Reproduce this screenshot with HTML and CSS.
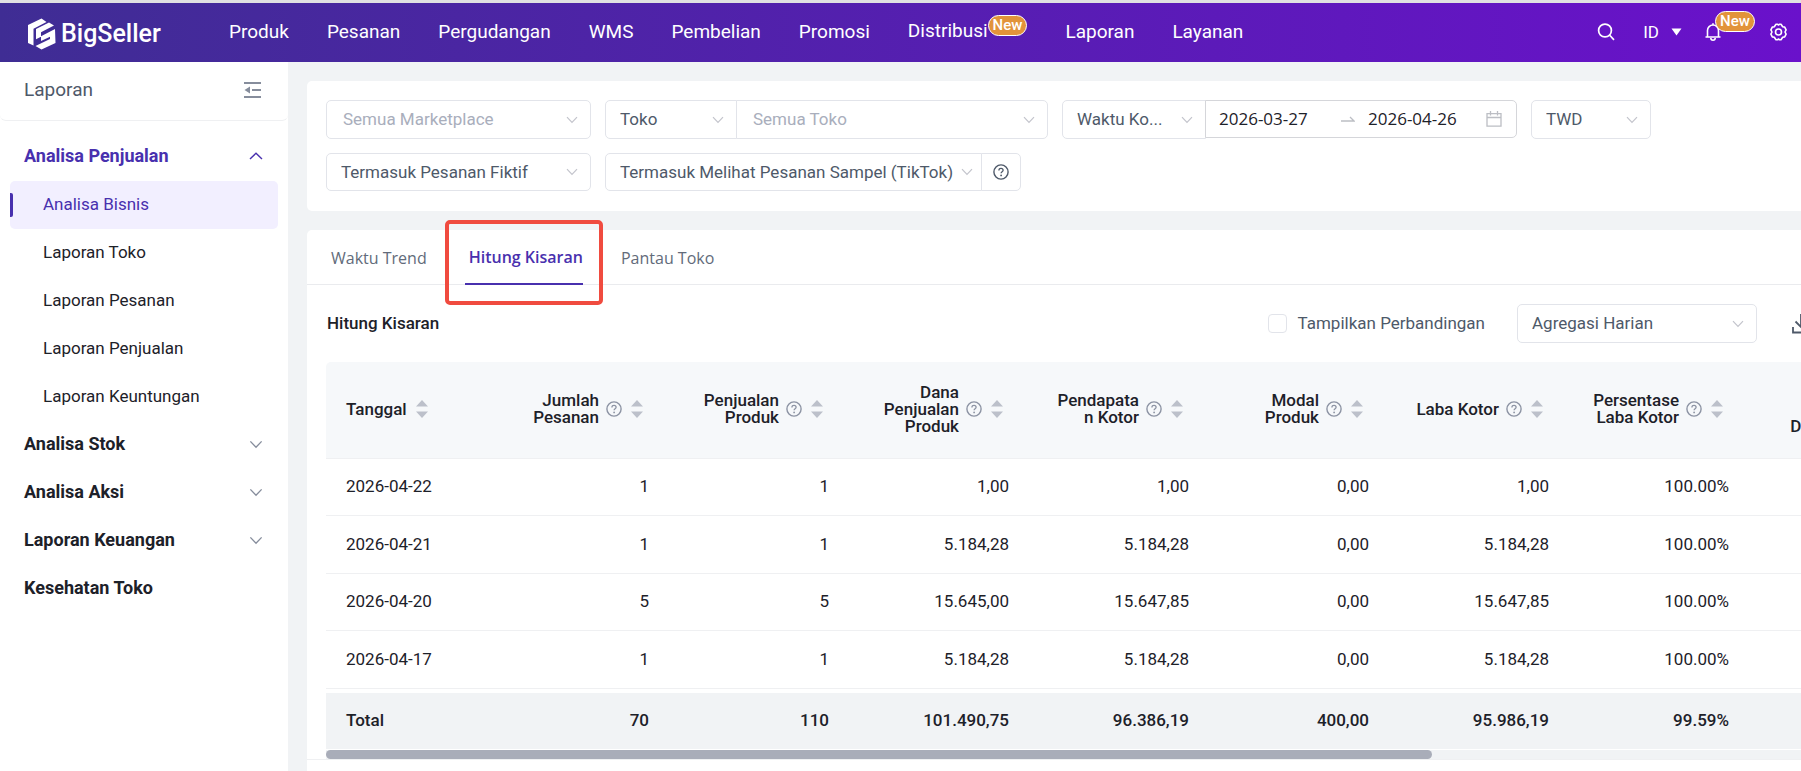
FILE: index.html
```html
<!DOCTYPE html>
<html lang="id">
<head>
<meta charset="utf-8">
<title>BigSeller - Analisa Bisnis</title>
<link rel="stylesheet" href="styles.css">
</head>
<body>
<svg class="defs" aria-hidden="true">
  <symbol id="down" viewBox="0 0 12 8"><path d="M1 1.2 6 6.4 11 1.2" fill="none" stroke="currentColor" stroke-width="1.2"/></symbol>
  <symbol id="up" viewBox="0 0 14 8"><path d="M1 7 7 1.2 13 7" fill="none" stroke="currentColor" stroke-width="1.4"/></symbol>
  <symbol id="help" viewBox="0 0 16 16"><circle cx="8" cy="8" r="7.1" fill="none" stroke="currentColor" stroke-width="1.4"/><path d="M5.9 6.4C5.9 5 6.8 4.3 8 4.3s2.1.8 2.1 1.9c0 1.5-2 1.5-2 3.1" fill="none" stroke="currentColor" stroke-width="1.3"/><circle cx="8.1" cy="11.4" r=".9" fill="currentColor"/></symbol>
  <symbol id="sort" viewBox="0 0 12 20"><path d="M6 1 12 7.500H0zM6 19 0 12.500H12z" fill="currentColor"/></symbol>
</svg>
<header class="topbar">
  <a class="logo" href="#">
    <svg width="30" height="32" viewBox="0 0 30 36" preserveAspectRatio="none"><path d="M14.500.5 1 8v20l5.500 3V12L19.500 4.500z" fill="#fff"/><path d="M22 5 9 12.500V24l5-3v-5l13-7.500zM28 12.500l-14 8V26l9-5v2.500L8.500 31.500l6 4L28.500 28z" fill="#fff"/></svg>
    <span>BigSeller</span>
  </a>
  <nav class="nav">
    <a href="#">Produk</a><a href="#">Pesanan</a><a href="#">Pergudangan</a><a href="#">WMS</a><a href="#">Pembelian</a><a href="#">Promosi</a>
    <a href="#" class="with-badge">Distribusi<span class="badge">New</span></a><a href="#">Laporan</a><a href="#">Layanan</a>
  </nav>
  <div class="tools">
    <button class="tool" aria-label="Cari"><svg width="18" height="18" viewBox="0 0 18 18" fill="none" stroke="currentColor" stroke-width="1.700"><circle cx="8" cy="7.500" r="6.400"/><path d="m12.500 12 4.500 4.800"/></svg></button>
    <button class="tool lang">ID <svg width="11" height="8" viewBox="0 0 11 8"><path d="M.5.5h10L5.500 7.500z" fill="currentColor"/></svg></button>
    <button class="tool bell" aria-label="Notifikasi"><svg width="16" height="18" viewBox="0 0 16 18" fill="none" stroke="currentColor" stroke-width="1.600"><path d="M.5 14h15M2.500 14V7.500a5.500 5.500 0 0 1 11 0V14M8 2V.3M5.800 15a2.200 2.200 0 0 0 4.400 0"/></svg><span class="badge">New</span></button>
    <button class="tool" aria-label="Pengaturan"><svg width="17" height="18" viewBox="0 0 17 18" fill="none" stroke="currentColor" stroke-width="1.600" stroke-linejoin="round"><path d="M6 1.200h1.300L8.500 2l1.200-.8H11l1.700 2.600 2 .3 1.400 2.700L15 9l1.100 2.200-1.400 2.700-2 .3-1.700 2.600H9.700L8.500 16l-1.200.8H6l-1.700-2.600-2-.3L.9 11.200 2 9 .9 6.800l1.400-2.700 2-.3z"/><circle cx="8.500" cy="9" r="3"/></svg></button>
  </div>
</header>
<div class="body">
  <aside class="side">
    <div class="side-title">Laporan
      <button class="fold" aria-label="Tutup menu"><svg width="17" height="16" viewBox="0 0 17 16"><path d="M0 1h17M8 8h9M0 15h17" stroke="currentColor" stroke-width="1.800"/><path d="M6 4.500v7L.5 8z" fill="currentColor"/></svg></button>
    </div>
    <nav class="menu">
      <a class="group open" href="#">Analisa Penjualan<svg width="14" height="8"><use href="#up"/></svg></a>
      <a class="sub active" href="#">Analisa Bisnis</a>
      <a class="sub" href="#">Laporan Toko</a>
      <a class="sub" href="#">Laporan Pesanan</a>
      <a class="sub" href="#">Laporan Penjualan</a>
      <a class="sub" href="#">Laporan Keuntungan</a>
      <a class="group" href="#">Analisa Stok<svg width="14" height="9"><use href="#down"/></svg></a>
      <a class="group" href="#">Analisa Aksi<svg width="14" height="9"><use href="#down"/></svg></a>
      <a class="group" href="#">Laporan Keuangan<svg width="14" height="9"><use href="#down"/></svg></a>
      <a class="group" href="#">Kesehatan Toko</a>
    </nav>
  </aside>
  <main class="main">
    <section class="card filters">
      <div class="row">
        <div class="box w-market"><select class="placeholder" aria-label="Marketplace"><option>Semua Marketplace</option></select><svg width="12" height="8"><use href="#down"/></svg></div>
        <div class="join">
          <div class="box w-type"><select aria-label="Jenis"><option>Toko</option></select><svg width="12" height="8"><use href="#down"/></svg></div>
          <div class="box w-shop"><select class="placeholder" aria-label="Toko"><option>Semua Toko</option></select><svg width="12" height="8"><use href="#down"/></svg></div>
        </div>
        <div class="join">
          <div class="box w-time"><select aria-label="Jenis waktu"><option>Waktu Ko...</option></select><svg width="12" height="8"><use href="#down"/></svg></div>
          <div class="box dates"><input aria-label="Tanggal mulai" value="2026-03-27"><svg class="arrow" width="14" height="6" viewBox="0 0 14 6"><path d="M0 5h13L9 1" fill="none" stroke="currentColor" stroke-width="1.300"/></svg><input aria-label="Tanggal akhir" value="2026-04-26"><svg class="cal" width="16" height="16" viewBox="0 0 16 16" fill="none" stroke="currentColor" stroke-width="1.300"><path d="M1 2.700h14v12.500H1zM1 6.500h14M4.500 0v4.500M11.500 0v4.500"/></svg></div>
        </div>
        <div class="box w-cur"><select aria-label="Mata uang"><option>TWD</option></select><svg width="12" height="8"><use href="#down"/></svg></div>
      </div>
      <div class="row">
        <div class="box w-market"><select aria-label="Pesanan fiktif"><option>Termasuk Pesanan Fiktif</option></select><svg width="12" height="8"><use href="#down"/></svg></div>
        <div class="join">
          <div class="box w-sample"><select aria-label="Pesanan sampel"><option>Termasuk Melihat Pesanan Sampel (TikTok)</option></select><svg width="12" height="8"><use href="#down"/></svg></div>
          <button class="box help" aria-label="Bantuan"><svg width="16" height="16"><use href="#help"/></svg></button>
        </div>
      </div>
    </section>
    <section class="card report">
      <div class="tabs" role="tablist">
        <button class="tab" role="tab">Waktu Trend</button>
        <button class="tab on" role="tab" aria-selected="true">Hitung Kisaran<span class="mark"></span></button>
        <button class="tab" role="tab">Pantau Toko</button>
      </div>
      <div class="bar">
        <h2>Hitung Kisaran</h2>
        <label class="check"><input type="checkbox">Tampilkan Perbandingan</label>
        <div class="box w-agg"><select aria-label="Agregasi"><option>Agregasi Harian</option></select><svg width="12" height="8"><use href="#down"/></svg></div>
        <button class="dl" aria-label="Unduh"><svg width="18" height="20" viewBox="0 0 18 20" fill="none" stroke="currentColor" stroke-width="1.800"><path d="M1 13v5.500h16V13M9 0v13M3.500 7.500 9 13l5.500-5.500"/></svg></button>
      </div>
      <div class="scroll">
        <table>
          <colgroup><col class="c-date"><col><col><col><col><col><col><col><col></colgroup>
          <thead><tr>
            <th><div class="th"><span>Tanggal</span><svg width="12" height="20"><use href="#sort"/></svg></div></th>
            <th><div class="th"><span>Jumlah<br>Pesanan</span><svg class="q" width="16" height="16"><use href="#help"/></svg><svg width="12" height="20"><use href="#sort"/></svg></div></th>
            <th><div class="th"><span>Penjualan<br>Produk</span><svg class="q" width="16" height="16"><use href="#help"/></svg><svg width="12" height="20"><use href="#sort"/></svg></div></th>
            <th><div class="th"><span>Dana<br>Penjualan<br>Produk</span><svg class="q" width="16" height="16"><use href="#help"/></svg><svg width="12" height="20"><use href="#sort"/></svg></div></th>
            <th><div class="th"><span>Pendapata<br>n Kotor</span><svg class="q" width="16" height="16"><use href="#help"/></svg><svg width="12" height="20"><use href="#sort"/></svg></div></th>
            <th><div class="th"><span>Modal<br>Produk</span><svg class="q" width="16" height="16"><use href="#help"/></svg><svg width="12" height="20"><use href="#sort"/></svg></div></th>
            <th><div class="th"><span>Laba Kotor</span><svg class="q" width="16" height="16"><use href="#help"/></svg><svg width="12" height="20"><use href="#sort"/></svg></div></th>
            <th><div class="th"><span>Persentase<br>Laba Kotor</span><svg class="q" width="16" height="16"><use href="#help"/></svg><svg width="12" height="20"><use href="#sort"/></svg></div></th>
            <th><div class="th"><span><br><br>Dipotong</span><svg class="q" width="16" height="16"><use href="#help"/></svg><svg width="12" height="20"><use href="#sort"/></svg></div></th>
          </tr></thead>
          <tbody>
            <tr><td>2026-04-22</td><td>1</td><td>1</td><td>1,00</td><td>1,00</td><td>0,00</td><td>1,00</td><td>100.00%</td><td></td></tr>
            <tr><td>2026-04-21</td><td>1</td><td>1</td><td>5.184,28</td><td>5.184,28</td><td>0,00</td><td>5.184,28</td><td>100.00%</td><td></td></tr>
            <tr><td>2026-04-20</td><td>5</td><td>5</td><td>15.645,00</td><td>15.647,85</td><td>0,00</td><td>15.647,85</td><td>100.00%</td><td></td></tr>
            <tr><td>2026-04-17</td><td>1</td><td>1</td><td>5.184,28</td><td>5.184,28</td><td>0,00</td><td>5.184,28</td><td>100.00%</td><td></td></tr>
          </tbody>
        </table>
        <table class="total">
          <colgroup><col class="c-date"><col><col><col><col><col><col><col><col></colgroup>
          <tbody><tr><td>Total</td><td>70</td><td>110</td><td>101.490,75</td><td>96.386,19</td><td>400,00</td><td>95.986,19</td><td>99.59%</td><td></td></tr></tbody>
        </table>
        <div class="track"><div class="thumb"></div></div>
      </div>
      <div class="foot"></div>
    </section>
  </main>
</div>
</body>
</html>
```
FILE: styles.css
```css
* { box-sizing: border-box; }
body {
  margin: 0;
  height: 100vh;
  overflow: hidden;
  display: flex;
  flex-direction: column;
  background: #f1f3f5;
  color: #1d2129;
  font: 17px/20px Roboto, "Liberation Sans", sans-serif;
}
a { color: inherit; text-decoration: none; }
button, select, input { font: inherit; color: inherit; margin: 0; }
button { border: 0; background: none; padding: 0; }
svg { display: block; flex: none; }
.defs { position: absolute; width: 0; height: 0; }

.topbar {
  flex: none;
  display: flex;
  align-items: center;
  height: 62px;
  border-top: 3px solid #e0e1e2;
  padding: 0 14px 2px 27px;
  background: linear-gradient(90deg, #3f2d94, #6a11cb) padding-box;
  color: #fff;
}
.logo { display: flex; align-items: center; gap: 4px; width: 202px; padding-top: 4px; }
.logo span { font: 500 25px/36px Roboto, sans-serif; }
.nav { display: flex; align-items: center; gap: 38px; font-size: 19px; }
.with-badge { display: flex; }
.badge {
  height: 21px;
  padding: 0 4px;
  border: 1px solid #fff;
  border-radius: 11px;
  background: #e2933a;
  color: #fff;
  font: 500 15px/19px Roboto, sans-serif;
}
.nav .badge { margin-top: -6px; margin-bottom: 6px; }
.tools { display: flex; align-items: center; margin-left: auto; }
.tool { display: flex; align-items: center; }
.lang { gap: 12px; margin: 0 23px 0 28px; }
.bell { position: relative; margin-right: 49px; }
.bell .badge { position: absolute; left: 10px; top: -12px; }

.body { flex: 1; display: flex; min-height: 0; }
.side { flex: none; width: 288px; background: #fff; }
.side-title {
  display: flex;
  align-items: center;
  justify-content: space-between;
  height: 59px;
  padding: 0 27px 2px 24px;
  border-bottom: 1px solid #eff0f2;
  border-radius: 6px;
  color: #4e5969;
  font-size: 19px;
}
.fold { color: #868d9c; }
.menu { display: flex; flex-direction: column; padding: 12px 10px; }
.menu a { display: flex; align-items: center; height: 48px; padding-bottom: 2px; }
.menu .group { justify-content: space-between; padding: 0 15px 2px 14px; font-size: 18px; font-weight: 700; }
.group svg { color: #868d9c; }
.menu .open, .open svg { color: #4830ae; }
.menu .sub { padding-left: 33px; }
.active { position: relative; border-radius: 5px; background: #f2efff; color: #4830ae; }
.active::before {
  content: "";
  position: absolute;
  left: 0;
  top: 12px;
  width: 3px;
  height: 24px;
  border-radius: 0 2px 2px 0;
  background: #4830ae;
}

.main { flex: 1; min-width: 0; display: flex; flex-direction: column; gap: 19px; padding: 19px 0 0 19px; }
.card { background: #fff; border-radius: 5px 0 0 0; }
.filters { flex: none; display: flex; flex-direction: column; gap: 14px; padding: 19px 19px 20px; border-radius: 5px 0 0 5px; }
.row { display: flex; gap: 14px; }
.box { position: relative; height: 39px; border: 1px solid #e2e4ea; border-radius: 5px; background: #fff; color: #4e5969; }
.row + .row .box { height: 38px; }
.box select { width: 100%; height: 100%; padding: 0 30px 1px 14px; border: 0; background: none; appearance: none; }
.box select.placeholder { padding-left: 16px; color: #a9aebc; }
.box > svg { position: absolute; right: 12px; top: 0; bottom: 0; margin: auto 0; color: #c3c4cc; pointer-events: none; }
.join { display: flex; }
.join .box:first-child { border-radius: 5px 0 0 5px; }
.join .box + .box { margin-left: -1px; border-radius: 0 5px 5px 0; }
.w-market { width: 265px; }
.w-type { width: 132px; }
.w-shop { width: 312px; }
.w-time { width: 144px; }
.w-cur { width: 120px; }
.w-sample { width: 377px; }
.box.w-sample > svg { right: 8px; }
.w-sample select { padding-right: 22px; }
.w-agg { width: 240px; }
.dates { display: flex; align-items: center; width: 312px; height: 38px; padding: 0 14px 0 13px; border-color: #d5d6da; color: #1d2129; font: 17px/20px "Open Sans", "Noto Sans", sans-serif; }
.dates input { width: 122px; padding: 0; border: 0; background: none; }
.box.dates > svg { position: static; margin: 0; color: #bcbec4; }
.dates input + .arrow + input { width: 100px; margin-left: 13px; }
.box.dates > .cal { margin-left: auto; }
.help { display: flex; align-items: center; justify-content: center; width: 40px; }
.box.help > svg { position: static; margin: 0; color: #4e5969; }

.report { flex: 1; min-height: 0; }
.tabs { display: flex; gap: 38px; height: 55px; padding: 0 24px; border-bottom: 1px solid #eaebee; }
.tab { position: relative; height: 55px; color: #626b7a; font: 16px/20px "Open Sans", "Noto Sans", sans-serif; }
.on { padding-left: 4px; color: #4830ae; font-weight: 600; border-bottom: 2px solid #4830ae; }
.mark { position: absolute; left: -20px; right: -20px; top: -10px; height: 85px; border: 4px solid #f04b3f; border-radius: 5px; }
.bar { display: flex; align-items: center; padding: 19px 0 19px 20px; }
.bar h2 { flex: 1; margin: 0; padding-bottom: 2px; font: 500 17px/20px Roboto, sans-serif; }
.check { display: flex; align-items: center; gap: 10px; margin-right: 32px; padding-bottom: 1px; color: #4e5969; }
.check input { appearance: none; width: 19px; height: 19px; border: 1px solid #e2e4ea; border-radius: 4px; }
.dl { flex: none; width: 18px; margin: 0 -9px 0 35px; color: #4e5969; }

.scroll { margin-left: 19px; overflow: hidden; }
table { width: 1602px; table-layout: fixed; border-collapse: separate; border-spacing: 0; }
.c-date { width: 162px; }
th { height: 97px; padding: 0 25px 2px 0; background: #f6f8fa; border-bottom: 1px solid #eff0f2; font-weight: 500; }
th:first-child { border-radius: 5px 0 0 0; padding-left: 20px; }
.th { display: flex; align-items: center; justify-content: flex-end; gap: 9px; line-height: 17px; text-align: right; color: #bcc0ca; }
.th span { color: #1d2129; }
.th .q { margin-left: -2px; color: #8c93a3; }
th:first-child .th { justify-content: flex-start; }
td { height: 57px; padding: 0 19px 2px; text-align: right; border-bottom: 1px solid #eff0f2; }
td:first-child { padding-left: 20px; text-align: left; }
tr:nth-child(even) td { height: 58px; }
.total { margin: 4px 0 1px; }
.total td { height: 56px; border: 0; background: #f1f3f5; font-weight: 500; }
.track { height: 9px; background: #f1f3f5; }
.thumb { width: 75%; height: 9px; border-radius: 5px; background: #a9adb9; }
.foot { border-top: 1px solid #eff0f2; }
```
